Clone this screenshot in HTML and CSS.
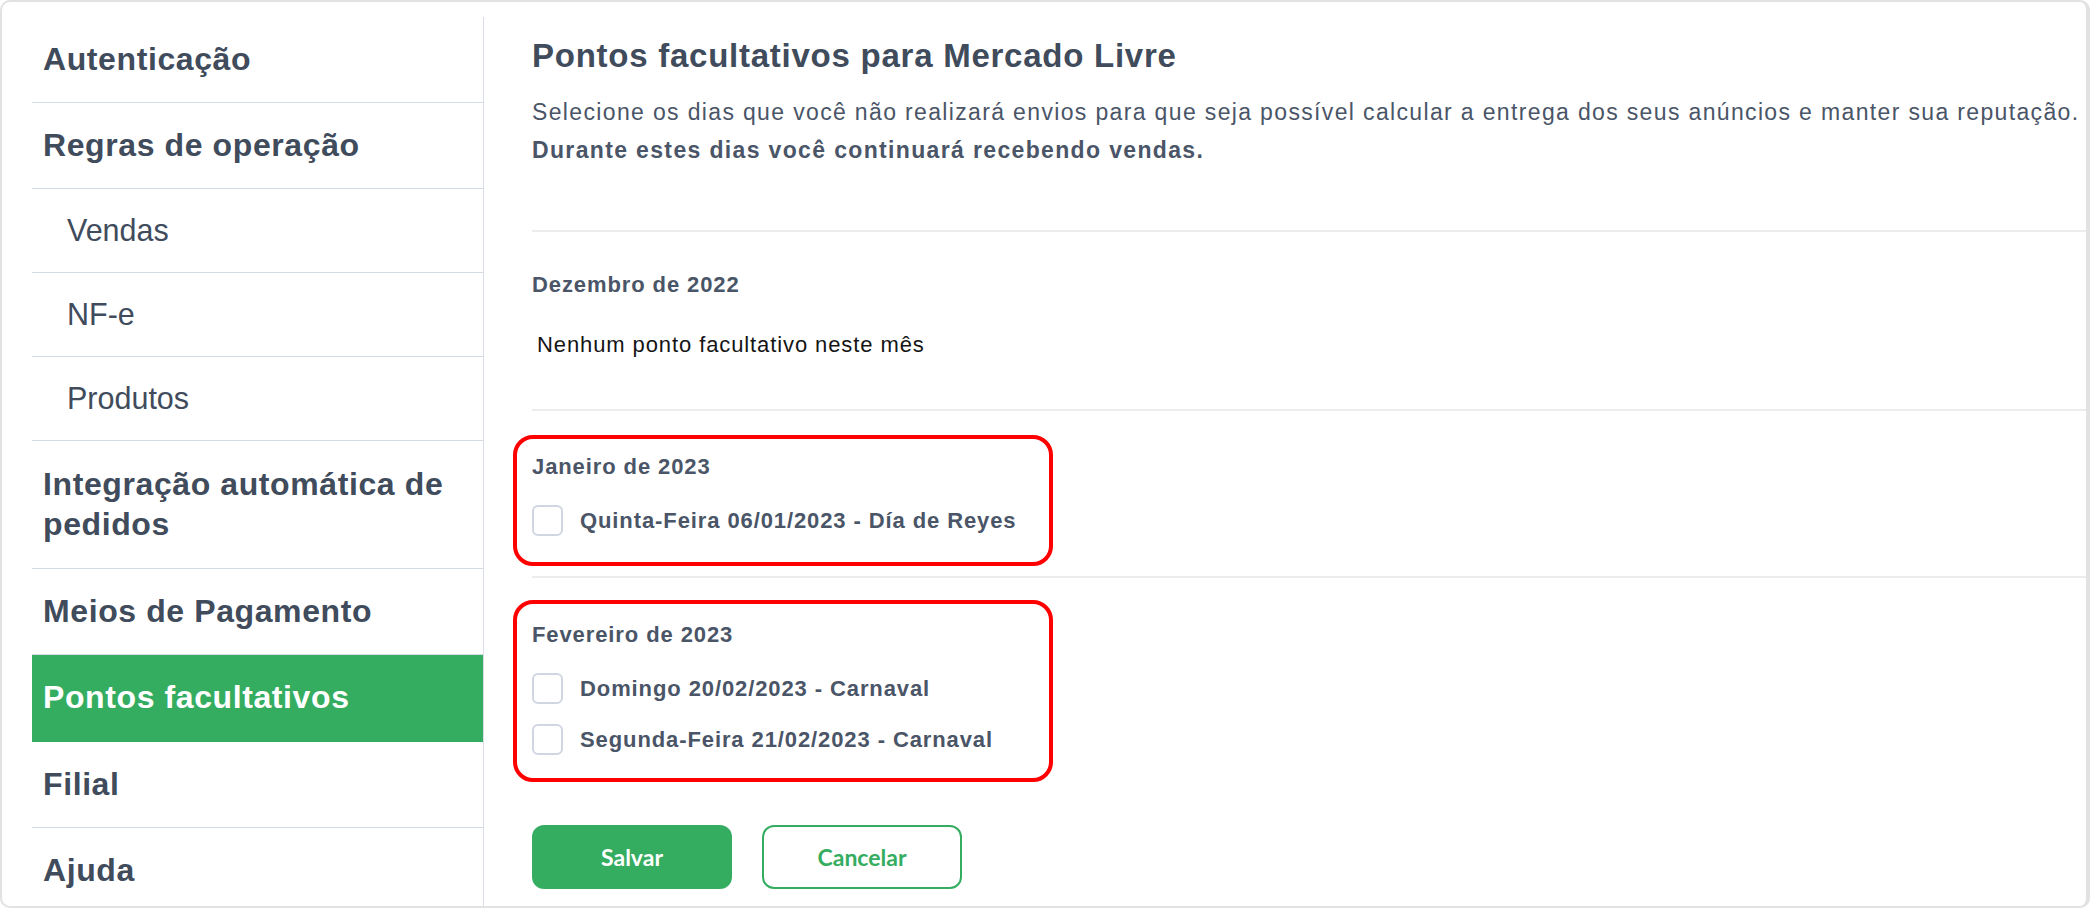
FILE: index.html
```html
<!DOCTYPE html>
<html lang="pt-BR">
<head>
  <meta charset="UTF-8">
  <title>Pontos facultativos</title>
  <link rel="stylesheet" href="styles.css">
</head>
<body>
  <div class="frame">
    <nav class="sidebar">
      <a class="nav-item">Autenticação</a>
      <a class="nav-item">Regras de operação</a>
      <a class="nav-item sub">Vendas</a>
      <a class="nav-item sub">NF-e</a>
      <a class="nav-item sub">Produtos</a>
      <a class="nav-item tall">Integração automática de pedidos</a>
      <a class="nav-item">Meios de Pagamento</a>
      <a class="nav-item active">Pontos facultativos</a>
      <a class="nav-item">Filial</a>
      <a class="nav-item">Ajuda</a>
    </nav>

    <main class="content">
      <div class="intro">
        <h1>Pontos facultativos para Mercado Livre</h1>
        <p>Selecione os dias que você não realizará envios para que seja possível calcular a entrega dos seus anúncios e manter sua reputação.<br>
        <strong>Durante estes dias você continuará recebendo vendas.</strong></p>
      </div>

      <!-- dezembro -->
      <section class="month month-first">
        <h2>Dezembro de 2022</h2>
        <p class="empty">Nenhum ponto facultativo neste mês</p>
      </section>

      <!-- janeiro -->
      <section class="month month-jan">
        <div class="highlight">
          <h2>Janeiro de 2023</h2>
          <label class="day"><input type="checkbox"> <span>Quinta-Feira 06/01/2023 - Día de Reyes</span></label>
        </div>
      </section>

      <!-- fevereiro -->
      <section class="month month-feb">
        <div class="highlight">
          <h2>Fevereiro de 2023</h2>
          <label class="day"><input type="checkbox"> <span>Domingo 20/02/2023 - Carnaval</span></label>
          <label class="day"><input type="checkbox"> <span>Segunda-Feira 21/02/2023 - Carnaval</span></label>
        </div>
      </section>

      <div class="actions">
        <button class="btn btn-primary">Salvar</button>
        <button class="btn btn-outline">Cancelar</button>
      </div>
    </main>
  </div>
</body>
</html>
```

FILE: styles.css
```css
body {
  margin: 0;
  font-family: 'Liberation Sans', Arial, sans-serif;
  background: #ffffff;
}

.frame {
  width: 2090px;
  height: 908px;
  box-sizing: border-box;
  border: 2px solid #e2e2e2;
  border-right-width: 4px;
  border-radius: 10px;
  overflow: hidden;
  display: flex;
  background: #ffffff;
}

/* menu lateral */
.sidebar {
  width: 452px;
  flex-shrink: 0;
  margin: 15px 0 0 30px;
  border-right: 1px solid #d9dee6;
  box-sizing: border-box;
  display: flex;
  flex-direction: column;
}

.nav-item {
  display: block;
  padding: 22px 11px 23px;
  border-bottom: 1px solid #d5dce5;
  color: #404b5c;
  font-size: 32px;
  font-weight: bold;
  letter-spacing: 0.6px;
  line-height: 40px;
  text-decoration: none;
}

.nav-item.tall {
  padding-top: 23px;
  padding-bottom: 24px;
}

.nav-item.sub {
  padding: 23px 11px 23px 35px;
  font-size: 30.5px;
  font-weight: normal;
  letter-spacing: 0;
  line-height: 37px;
}

.nav-item.active {
  background-color: #35ad61;
  border-bottom-color: #35ad61;
  color: #ffffff;
  padding-bottom: 24px;
}

/* conteudo */
.content {
  flex: 1;
  padding: 34px 0 0 48px;
  color: #4a5567;
}

.intro {
  padding-bottom: 61px;
  border-bottom: 2px solid #ececec;
}

h1 {
  margin: 0;
  font-size: 33px;
  letter-spacing: 0.75px;
  line-height: 40px;
  color: #404b5c;
}

.intro p {
  margin: 17px 0 0;
  font-size: 23px;
  letter-spacing: 1.35px;
  line-height: 38px;
  white-space: nowrap;
}

.month {
  border-bottom: 2px solid #ececec;
}

.month-first {
  padding: 39px 0 50px;
}

.month-jan {
  padding: 24px 0 10px;
}

.month-feb {
  padding-top: 22px;
  border-bottom: none;
}

h2 {
  margin: 0;
  font-size: 22px;
  letter-spacing: 0.9px;
  line-height: 28px;
  color: #4a5567;
}

.empty {
  margin: 32px 0 0;
  padding-left: 5px;
  font-size: 22px;
  letter-spacing: 0.9px;
  line-height: 28px;
  color: #151515;
}

.highlight {
  width: 540px;
  box-sizing: border-box;
  margin-left: -19px;
  padding: 14px 15px 26px;
  border: 4px solid #ff0000;
  border-radius: 20px;
  display: flex;
  flex-direction: column;
  gap: 20px;
}

.month-feb .highlight {
  padding-top: 17px;
  padding-bottom: 23px;
}

.highlight h2 {
  margin-bottom: 4px;
}

.day {
  display: flex;
  align-items: center;
  gap: 17px;
  font-size: 22px;
  font-weight: bold;
  letter-spacing: 0.9px;
  line-height: 28px;
  color: #4a5567;
}

.day input {
  appearance: none;
  -webkit-appearance: none;
  margin: 0;
  width: 31px;
  height: 31px;
  border: 2px solid #d0d7e2;
  border-radius: 6px;
  background: #ffffff;
}

.actions {
  display: flex;
  gap: 30px;
  margin-top: 43px;
}

.btn {
  width: 200px;
  height: 64px;
  border-radius: 12px;
  font-family: Lato, 'Noto Sans', sans-serif;
  font-size: 23px;
  font-weight: bold;
  cursor: pointer;
}

.btn-primary {
  background-color: #35ad61;
  border: none;
  color: #ffffff;
}

.btn-outline {
  background: #ffffff;
  border: 2px solid #35ad61;
  color: #35ad61;
}
```
